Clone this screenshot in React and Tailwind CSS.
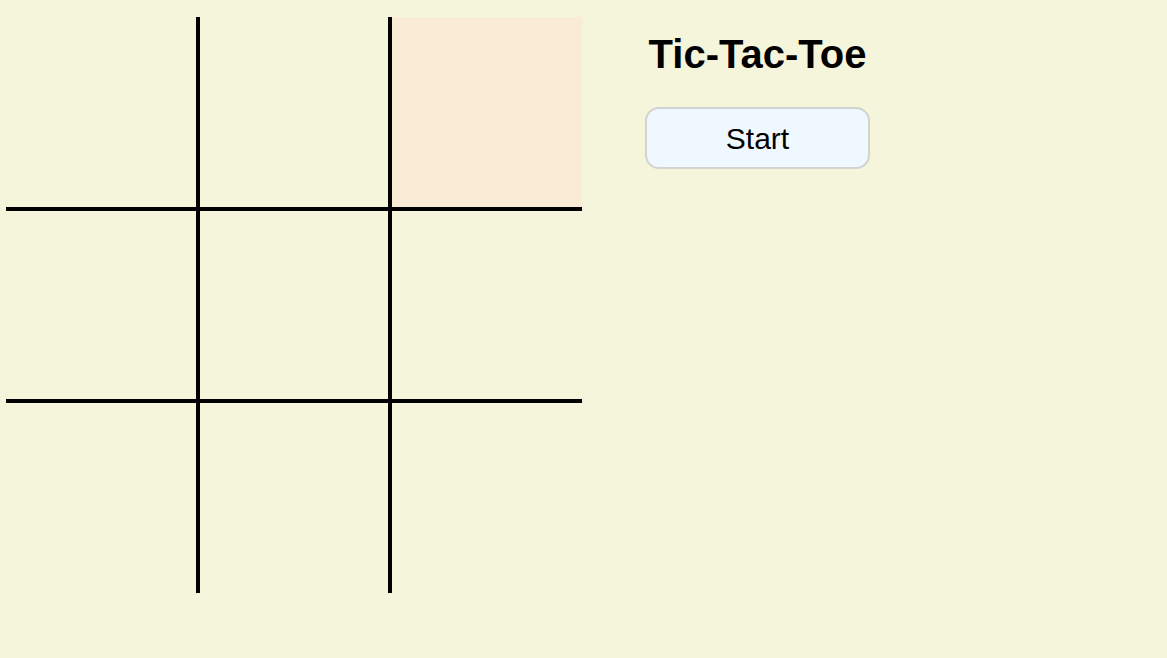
import React, { useState } from "react";

const Cell = ({ i, active }) => {
    const col = i % 3;
    const row = Math.floor(i / 3);
    let cls = "w-[192px] h-[192px] border-black";
    if (col < 2) cls += " border-r-2";
    if (col > 0) cls += " border-l-2";
    if (row < 2) cls += " border-b-2";
    if (row > 0) cls += " border-t-2";
    if (active) cls += " bg-[#faebd7]";
    return <div className={cls}></div>;
};

const App = () => {
    const [cells] = useState(Array(9).fill(null));

    return (
        <div
            className="min-h-screen w-full bg-[#f5f5dc] flex items-start pl-[6px] pt-[17px]"
            style={{ fontFamily: '"Liberation Sans", Arial, sans-serif' }}
        >
            <div className="grid grid-cols-[192px_192px_192px]">
                {cells.map((c, i) => (
                    <Cell key={i} i={i} active={i === 2} />
                ))}
            </div>
            <div className="ml-[63px] w-[225px] flex flex-col items-center">
                <h1 className="text-[40px] font-bold leading-none mt-[17px] text-black">Tic-Tac-Toe</h1>
                <button className="mt-[33px] w-[225px] h-[62px] bg-[#f0f8ff] border-2 border-[#d3d3d3] rounded-[14px] text-[30px] text-black">
                    Start
                </button>
            </div>
        </div>
    );
};

export default App;
